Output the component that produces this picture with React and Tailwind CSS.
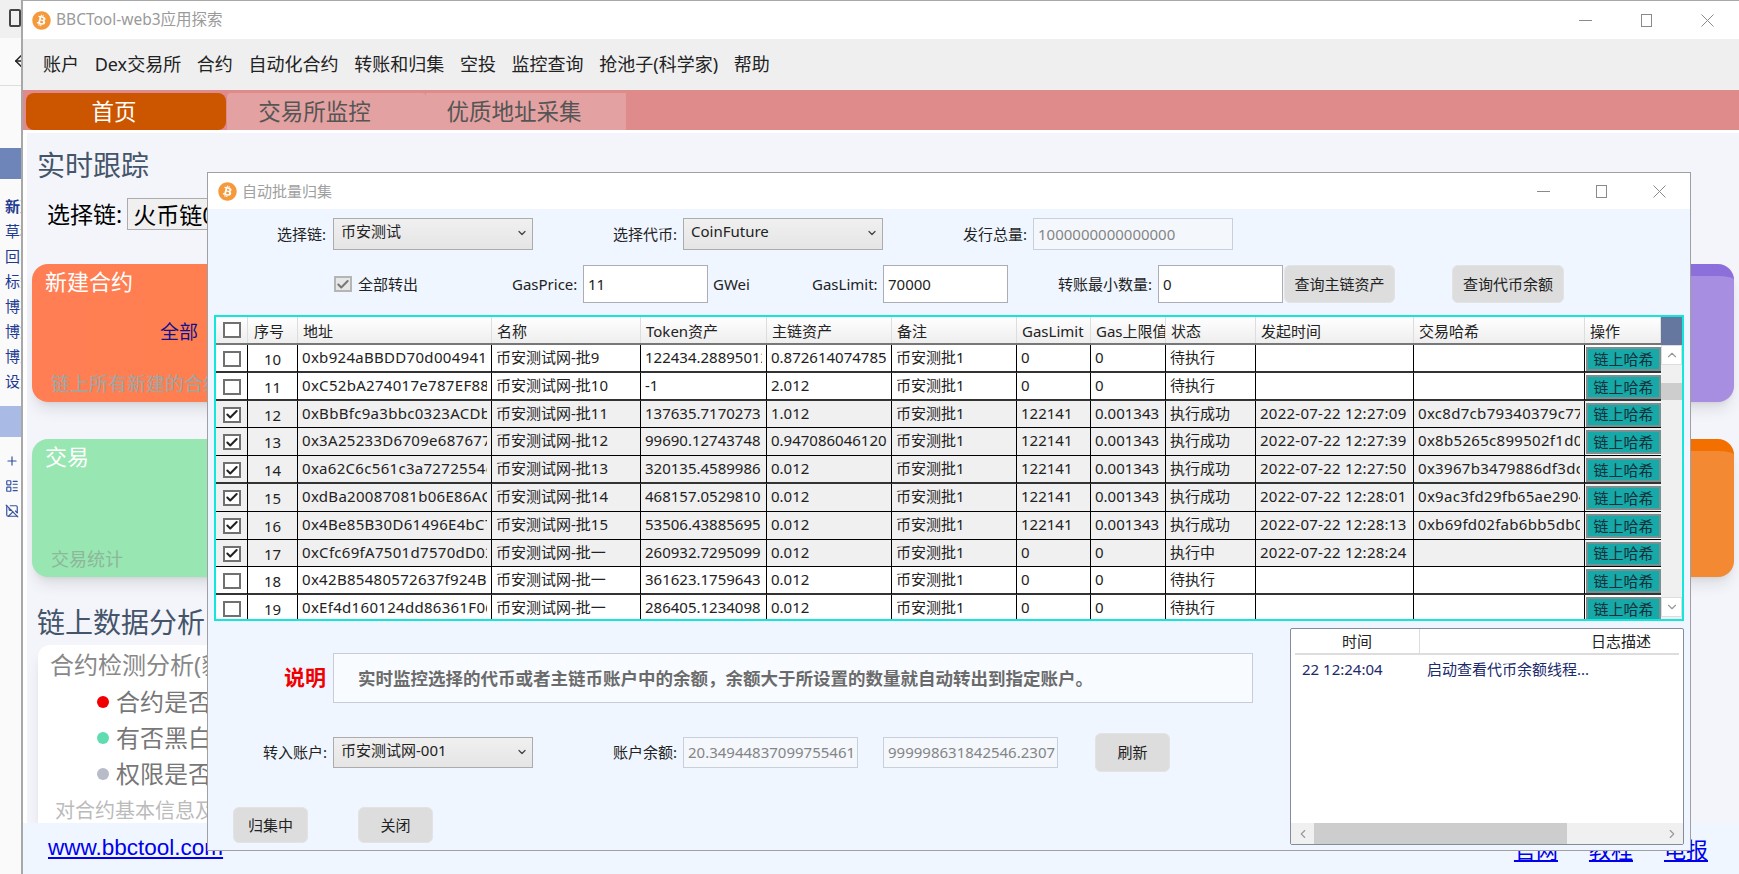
import { Check, ChevronDown, ChevronLeft, ChevronRight, ChevronUp, Plus, LayoutList, ImageOff, ArrowLeft } from "lucide-react";
import { FaBitcoin } from "react-icons/fa";

const MENU = ["账户", "Dex交易所", "合约", "自动化合约", "转账和归集", "空投", "监控查询", "抢池子(科学家)", "帮助"];
const SIDE = ["新建", "草稿", "回收", "标签", "博客", "博文", "博主", "设置"];
const COLS = "grid-cols-[32px_50px_194px_149px_126px_125px_125px_74px_75px_90px_158px_171px_76px]";
const HEAD = ["序号", "地址", "名称", "Token资产", "主链资产", "备注", "GasLimit", "Gas上限值", "状态", "发起时间", "交易哈希", "操作"];

const ROWS = [
  { n: 10, addr: "0xb924aBBDD70d004941298", name: "币安测试网-批9", token: "122434.28895012", main: "0.8726140747851", gl: "0", cap: "0", status: "待执行", time: "", hash: "", thick: true },
  { n: 11, addr: "0xC52bA274017e787EF88A3", name: "币安测试网-批10", token: "-1", main: "2.012", gl: "0", cap: "0", status: "待执行", time: "", hash: "", thick: true },
  { n: 12, addr: "0xBbBfc9a3bbc0323ACDb41", name: "币安测试网-批11", token: "137635.71702731", main: "1.012", gl: "122141", cap: "0.001343", status: "执行成功", time: "2022-07-22 12:27:09", hash: "0xc8d7cb79340379c7712", checked: true },
  { n: 13, addr: "0x3A25233D6709e68767721", name: "币安测试网-批12", token: "99690.12743748", main: "0.9470860461201", gl: "122141", cap: "0.001343", status: "执行成功", time: "2022-07-22 12:27:39", hash: "0x8b5265c899502f1d0ab", checked: true },
  { n: 14, addr: "0xa62C6c561c3a7272554e1", name: "币安测试网-批13", token: "320135.45899861", main: "0.012", gl: "122141", cap: "0.001343", status: "执行成功", time: "2022-07-22 12:27:50", hash: "0x3967b3479886df3dc41", checked: true, thick: true },
  { n: 15, addr: "0xdBa20087081b06E86AC31", name: "币安测试网-批14", token: "468157.05298101", main: "0.012", gl: "122141", cap: "0.001343", status: "执行成功", time: "2022-07-22 12:28:01", hash: "0x9ac3fd29fb65ae29042", checked: true },
  { n: 16, addr: "0x4Be85B30D61496E4bC7A1", name: "币安测试网-批15", token: "53506.43885695", main: "0.012", gl: "122141", cap: "0.001343", status: "执行成功", time: "2022-07-22 12:28:13", hash: "0xb69fd02fab6bb5db0c1", checked: true },
  { n: 17, addr: "0xCfc69fA7501d7570dD021", name: "币安测试网-批一", token: "260932.72950991", main: "0.012", gl: "0", cap: "0", status: "执行中", time: "2022-07-22 12:28:24", hash: "", checked: true },
  { n: 18, addr: "0x42B85480572637f924Ba1", name: "币安测试网-批一", token: "361623.17596431", main: "0.012", gl: "0", cap: "0", status: "待执行", time: "", hash: "", thick: true },
  { n: 19, addr: "0xEf4d160124dd86361F0621", name: "币安测试网-批一", token: "286405.12340981", main: "0.012", gl: "0", cap: "0", status: "待执行", time: "", hash: "" },
];

function WinControls({ gap }) {
  return (
    <div className={`flex items-center text-[#8a8a8a] ${gap}`}>
      <svg width="13" height="13" viewBox="0 0 13 13"><path d="M0 6.5h13" stroke="currentColor" /></svg>
      <svg width="13" height="13" viewBox="0 0 13 13"><rect x="1.5" y="0.5" width="10" height="12" fill="none" stroke="currentColor" /></svg>
      <svg width="13" height="13" viewBox="0 0 13 13"><path d="M0.5 0.5l12 12M12.5 0.5l-12 12" stroke="currentColor" /></svg>
    </div>
  );
}

function Select({ value, className }) {
  return (
    <div className={`flex w-[200px] items-start justify-between border border-[#acacac] bg-gradient-to-b from-[#f0f0f0] to-[#e5e5e5] pl-[7px] pr-[4px] pt-[2px] ${className}`}>
      <span className="text-[15px] leading-[20px] text-[#222]">{value}</span>
      <ChevronDown size={12} strokeWidth={2.5} className="mt-[6px] text-[#444]" />
    </div>
  );
}

function Input({ value, disabled, className }) {
  return (
    <div className={`flex items-center overflow-hidden whitespace-nowrap border px-[4px] text-[15px] ${disabled ? "border-[#c8d0dc] bg-[#f4f8fd] text-[#858585]" : "border-[#abadb3] bg-white text-[#222]"} ${className}`}>
      {value}
    </div>
  );
}

function GrayButton({ children, className }) {
  return (
    <div className={`flex items-center justify-center rounded-md border border-[#e3e3e3] bg-[#dddddd] text-[15px] text-[#222] ${className}`}>
      {children}
    </div>
  );
}

function Box({ checked, disabled }) {
  return (
    <div className={`flex h-[16px] w-[18px] items-center justify-center border-2 ${disabled ? "border-[#b5b5b5] bg-[#e6e6e6] text-[#777]" : "border-[#707070] bg-white text-[#222]"}`}>
      {checked && <Check size={15} strokeWidth={3.5} />}
    </div>
  );
}

function Cell({ children, className = "" }) {
  return (
    <div className={`overflow-hidden whitespace-nowrap border-r border-black pl-[4px] pr-[4px] text-[15px] leading-[24px] text-[#222] ${className}`}>
      <div className="overflow-hidden">{children}</div>
    </div>
  );
}

function Row({ r }) {
  return (
    <div className={`grid h-[27.8px] ${COLS} ${r.checked ? "bg-[#f0f0f0]" : "bg-white"} ${r.thick ? "border-b-2 border-[#333]" : "border-b border-black"}`}>
      <div className="flex justify-center border-r border-black pt-[6px]"><Box checked={r.checked} /></div>
      <div className="border-r border-black pt-[1px] text-center text-[15px] leading-[26px] text-[#222]">{r.n}</div>
      <Cell className="tracking-[0.3px]">{r.addr}</Cell>
      <Cell>{r.name}</Cell>
      <Cell>{r.token}</Cell>
      <Cell>{r.main}</Cell>
      <Cell>币安测批1</Cell>
      <Cell>{r.gl}</Cell>
      <Cell>{r.cap}</Cell>
      <Cell>{r.status}</Cell>
      <Cell className="tracking-[0.25px]">{r.time}</Cell>
      <Cell className="tracking-[0.3px]">{r.hash}</Cell>
      <div className="pl-[1px] pt-[2px]">
        <div className="flex h-[24px] items-center justify-center border-2 border-[#7a9090] bg-[#17a8a8] text-[15px] text-[#14303a]">链上哈希</div>
      </div>
    </div>
  );
}

function BatchTable() {
  return (
    <div className="ml-[6px] mt-[12px] flex h-[306px] w-[1470px] overflow-hidden border-2 border-[#14e6dc] bg-white">
      <div className="w-[1445px] shrink-0">
        <div className={`grid h-[28px] ${COLS} border-b-2 border-[#777] bg-gradient-to-b from-white to-[#eeeeee]`}>
          <div className="flex justify-center border-r border-[#ddd] pt-[5px]"><Box /></div>
          {HEAD.map((h, i) => (
            <div key={h} className={`overflow-hidden whitespace-nowrap border-r border-[#ddd] text-[15px] leading-[28px] text-[#222] ${i === 0 ? "pl-[6px]" : "pl-[5px] pr-[6px]"}`}>
              {h}
            </div>
          ))}
        </div>
        {ROWS.map((r) => <Row key={r.n} r={r} />)}
      </div>
      <div className="flex w-[23px] flex-col">
        <div className="h-[28px] bg-[#66779f]" />
        <div className="flex flex-1 flex-col bg-[#f0f0f0]">
          <div className="flex h-[20px] items-center justify-center border border-[#ddd] bg-white text-[#999]"><ChevronUp size={14} /></div>
          <div className="mt-[18px] h-[17px] bg-[#cdcdcd]" />
          <div className="flex-1" />
          <div className="mb-[2px] flex h-[20px] items-center justify-center border border-[#ddd] bg-white text-[#999]"><ChevronDown size={14} /></div>
        </div>
      </div>
    </div>
  );
}

function LogPanel() {
  return (
    <div className="mt-[7px] flex h-[217px] w-[394px] flex-col overflow-hidden rounded-[2px] border border-[#858b9c] bg-white">
      <div className="mx-[4px] flex h-[26px] border-b-2 border-[#ddd] text-[15px] leading-[24px] text-[#222]">
        <div className="w-[125px] border-r border-[#ddd] pl-[47px]">时间</div>
        <div className="flex-1 overflow-hidden whitespace-nowrap pl-[171px]">日志描述</div>
      </div>
      <div className="flex flex-1 items-start pt-[3px] text-[15px] text-[#1b2a6b]">
        <span className="ml-[11px] w-[125px]">22 12:24:04</span>
        <span>启动查看代币余额线程...</span>
      </div>
      <div className="flex h-[21px] bg-[#f0f0f0] text-[#999]">
        <div className="flex w-[23px] items-center justify-center"><ChevronLeft size={14} /></div>
        <div className="w-[253px] bg-[#cdcdcd]" />
        <div className="flex-1" />
        <div className="flex w-[23px] items-center justify-center"><ChevronRight size={14} /></div>
      </div>
    </div>
  );
}

function BatchDialog() {
  return (
    <div className="absolute left-[207px] top-[172px] flex h-[679px] w-[1484px] flex-col border border-[#a0a0a0] bg-[#eff6ff] text-[15px] text-[#222]">
      <div className="flex h-[36px] items-center justify-between bg-white pl-[10px] pr-[24px]">
        <div className="flex items-center gap-[5px]">
          <FaBitcoin size={19} className="text-[#f59a3c]" />
          <span className="text-[15px] text-[#a0a0a0]">自动批量归集</span>
        </div>
        <WinControls gap="gap-[45px]" />
      </div>

      <div className="mt-[9px] flex h-[32px] items-center">
        <span className="w-[118px] text-right">选择链:</span>
        <Select value="币安测试" className="ml-[7px] h-[32px]" />
        <span className="ml-[80px] w-[64px] whitespace-nowrap text-right">选择代币:</span>
        <Select value="CoinFuture" className="ml-[6px] h-[32px]" />
        <span className="ml-[80px] w-[63px] whitespace-nowrap text-right">发行总量:</span>
        <Input disabled value="1000000000000000" className="ml-[7px] h-[32px] w-[200px]" />
      </div>

      <div className="mt-[15px] flex h-[38px] items-center">
        <div className="ml-[126px] flex w-[178px] items-center gap-[6px]">
          <Box checked disabled />
          <span>全部转出</span>
        </div>
        <span className="w-[65px]">GasPrice:</span>
        <Input value="11" className="ml-[6px] h-[38px] w-[125px]" />
        <span className="ml-[5px] w-[99px]">GWei</span>
        <span className="w-[64px]">GasLimit:</span>
        <Input value="70000" className="ml-[7px] h-[38px] w-[125px]" />
        <span className="ml-[50px] w-[93px] whitespace-nowrap text-right">转账最小数量:</span>
        <Input value="0" className="ml-[7px] h-[38px] w-[125px]" />
        <GrayButton className="ml-[1px] h-[38px] w-[111px]">查询主链资产</GrayButton>
        <GrayButton className="ml-[57px] h-[38px] w-[112px]">查询代币余额</GrayButton>
      </div>

      <BatchTable />

      <div className="flex">
        <div className="w-[1082px]">
          <div className="mt-[32px] flex h-[50px] items-center">
            <span className="w-[118px] text-right text-[21px] font-bold text-[#f00000]">说明</span>
            <div className="ml-[7px] flex h-[50px] w-[920px] items-center border border-[#c8ccd8] bg-[#f8fbff] pl-[24px] text-[17.5px] font-bold text-[#6b6b6b]">
              实时监控选择的代币或者主链币账户中的余额，余额大于所设置的数量就自动转出到指定账户。
            </div>
          </div>
          <div className="mt-[30px] flex h-[39px] items-center">
            <span className="w-[119px] whitespace-nowrap text-right">转入账户:</span>
            <Select value="币安测试网-001" className="ml-[6px] h-[31px]" />
            <span className="ml-[80px] w-[63px] whitespace-nowrap text-right">账户余额:</span>
            <Input disabled value="20.34944837099755461" className="ml-[7px] h-[31px] w-[175px]" />
            <Input disabled value="999998631842546.2307" className="ml-[25px] h-[31px] w-[175px]" />
            <GrayButton className="ml-[37px] h-[39px] w-[75px]">刷新</GrayButton>
          </div>
          <div className="ml-[25px] mt-[35px] flex gap-[50px]">
            <GrayButton className="h-[36px] w-[75px]">归集中</GrayButton>
            <GrayButton className="h-[36px] w-[75px]">关闭</GrayButton>
          </div>
        </div>
        <LogPanel />
      </div>
    </div>
  );
}

function Bullet({ color, children }) {
  return (
    <div className="flex h-[36px] items-center">
      <span className={`ml-[47px] h-[12px] w-[12px] rounded-full ${color}`} />
      <span className="ml-[7px] whitespace-nowrap text-[24px] text-[#777]">{children}</span>
    </div>
  );
}

function MainContent() {
  return (
    <div className="ml-[4px] flex h-[690px] flex-1 flex-col overflow-hidden bg-[#f3f5fa] pt-[12px]">
      <div className="ml-[10px] text-[28px] leading-[40px] text-[#44546a]">实时跟踪</div>
      <div className="ml-[20px] mt-[13px] flex h-[32px] items-center gap-[5px] text-[23px] text-black">
        <span>选择链:</span>
        <div className="h-[32px] w-[200px] whitespace-nowrap border border-[#acacac] bg-[#f0f0f0] pl-[5px] leading-[32px]">火币链0</div>
      </div>

      <div className="mx-[5px] mt-[34px] flex justify-between">
        <div className="relative h-[138px] w-[700px] rounded-2xl bg-gradient-to-r from-[#ff7e54] to-[#ff8140] pl-[13px] text-white shadow-lg">
          <div className="text-[22px] leading-[34px]">新建合约</div>
          <div className="absolute left-[128px] top-[54px] text-[19px] text-[#12128c]">全部</div>
          <div className="absolute bottom-[4px] left-[19px] text-[19px] text-[#9aa8a8]">链上所有新建的合约</div>
        </div>
        <div className="h-[138px] w-[500px] rounded-2xl border-t-[12px] border-[#8d6fdc] bg-[#a88ee0] shadow-lg" />
      </div>

      <div className="mx-[5px] mt-[37px] flex justify-between">
        <div className="relative h-[138px] w-[700px] rounded-2xl bg-[#98e6b2] pl-[13px] text-white shadow-lg">
          <div className="text-[22px] leading-[34px]">交易</div>
          <div className="absolute bottom-[4px] left-[19px] text-[18px] text-[#8db69a]">交易统计</div>
        </div>
        <div className="h-[138px] w-[500px] rounded-2xl border-t-[12px] border-[#f26f00] bg-[#f38a33] shadow-lg" />
      </div>

      <div className="ml-[10px] mt-[25px] text-[28px] leading-[40px] text-[#44546a]">链上数据分析</div>
      <div className="ml-[11px] mt-[3px] w-[700px] flex-1 overflow-hidden rounded-t-xl bg-white pl-[12px] pt-[2px] shadow-lg">
        <div className="whitespace-nowrap text-[24px] leading-[36px] text-[#888]">合约检测分析(貔貅)</div>
        <div className="mt-[1px]">
          <Bullet color="bg-[#f00000]">合约是否开源</Bullet>
          <Bullet color="bg-[#5fdcb0]">有否黑白名单</Bullet>
          <Bullet color="bg-[#b8bcc8]">权限是否丢弃</Bullet>
        </div>
        <div className="ml-[5px] mt-[4px] whitespace-nowrap text-[20px] text-[#bbb]">对合约基本信息及买卖进行检测</div>
      </div>
    </div>
  );
}

function SideStrip() {
  return (
    <div className="flex h-full w-[21px] shrink-0 flex-col overflow-hidden bg-[#fafafa] text-[#1f3a93]">
      <div className="flex h-[38px] items-end bg-[#f0f0f0] pb-[11px] pl-[9px]"><div className="h-[18px] w-[14px] rounded-[2px] border-2 border-[#444]" /></div>
      <div className="h-[48px] border-b border-[#ddd] pl-[12px] pt-[14px] text-[#222]"><ArrowLeft size={18} /></div>
      <div className="mt-[62px] h-[31px] bg-[#6d85b8]" />
      <div className="ml-[5px] mt-[15px] flex flex-col whitespace-nowrap text-[15px] leading-[25px]">
        {SIDE.map((s, i) => <span key={i} className={i === 0 ? "font-bold" : ""}>{s}</span>)}
      </div>
      <div className="mt-[12px] h-[31px] bg-[#a9bbe4]" />
      <div className="ml-[5px] mt-[17px] flex flex-col gap-[11px] text-[#33509e]">
        <Plus size={14} />
        <LayoutList size={14} />
        <ImageOff size={14} />
      </div>
    </div>
  );
}

export default function App() {
  return (
    <div className="relative flex h-[874px] w-[1739px] overflow-hidden bg-white font-['Noto_Sans','Noto_Sans_CJK_SC',sans-serif]">
      <SideStrip />
      <div className="flex min-w-0 flex-1 flex-col border-l-2 border-t border-[#a8a8a8] bg-white">
        <div className="flex h-[38px] items-center justify-between pl-[9px] pr-[25px]">
          <div className="flex items-center gap-[5px]">
            <FaBitcoin size={19} className="text-[#f59a3c]" />
            <span className="text-[15.5px] text-[#9a9a9a]">BBCTool-web3应用探索</span>
          </div>
          <WinControls gap="gap-[48px]" />
        </div>
        <div className="flex h-[51px] items-center gap-[15.7px] bg-[#efefef] pl-[20px] text-[18px] text-[#222]">
          {MENU.map((m) => <span key={m} className="whitespace-nowrap">{m}</span>)}
        </div>
        <div className="flex h-[40px] items-end bg-[#e08b8b] pl-[3px] text-[22.5px]">
          <div className="flex h-[37px] w-[200px] items-center justify-center rounded-lg bg-[#cc5500] pr-[24px] text-white">首页</div>
          <div className="ml-[1px] flex h-[37px] w-[199px] items-center justify-center rounded-t bg-[#e3a1a1] pr-[24px] text-[#555]">交易所监控</div>
          <div className="flex h-[37px] w-[200px] items-center justify-center bg-[#e3a1a1] pr-[24px] text-[#555]">优质地址采集</div>
        </div>
        <div className="h-[3px] bg-white" />
        <MainContent />
        <div className="flex h-[51px] items-start justify-between bg-[#eff6ff] pl-[25px] pr-[31px] text-[#0000ee]">
          <span className="mt-[8px] font-['Liberation_Sans',sans-serif] text-[22.5px] underline">www.bbctool.com</span>
          <div className="mt-[10px] flex gap-[31px] text-[22px] underline">
            <span>官网</span>
            <span>教程</span>
            <span>电报</span>
          </div>
        </div>
      </div>
      <BatchDialog />
    </div>
  );
}
